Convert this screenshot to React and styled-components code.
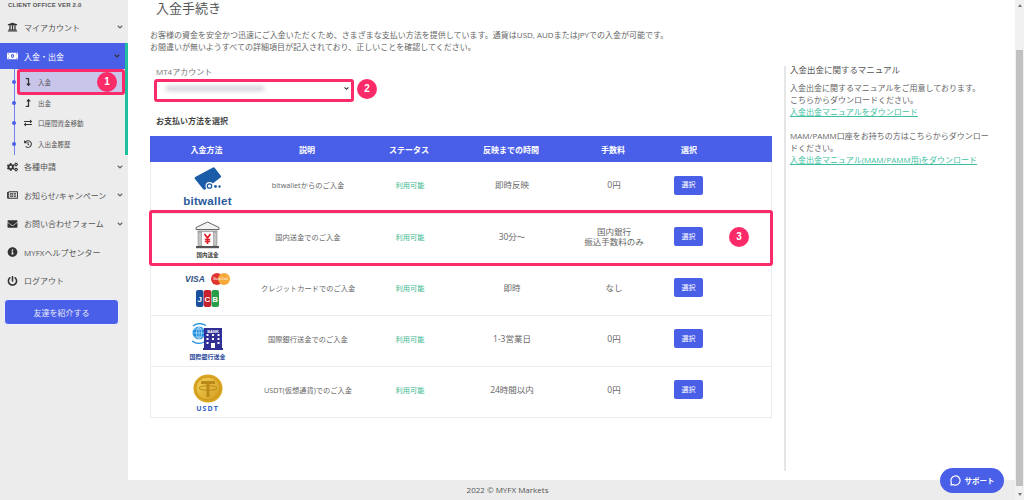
import React from 'react'
import styled, { createGlobalStyle } from 'styled-components'
import {
  FaUniversity,
  FaMoneyBillAlt,
  FaLevelDownAlt,
  FaLevelUpAlt,
  FaExchangeAlt,
  FaHistory,
  FaCogs,
  FaRegNewspaper,
  FaEnvelope,
  FaInfoCircle,
  FaPowerOff,
  FaAngleDown,
} from 'react-icons/fa'
import { MessageCircle } from 'lucide-react'

const fontStack = '"Open Sans", "Noto Sans CJK JP", sans-serif'

const GlobalStyle = createGlobalStyle`
  html, body {
    margin: 0;
    height: 500px;
    overflow: hidden;
    background: #fff;
  }
  * {
    box-sizing: border-box;
  }
  body {
    font-family: ${fontStack};
    color: #666;
  }
`

const Page = styled.div`
  position: relative;
  display: flex;
  width: 1024px;
  height: 500px;
  overflow: hidden;
`

const Sidebar = styled.aside`
  width: 128px;
  flex: none;
  background: #ececec;
  display: flex;
  flex-direction: column;
`

const Version = styled.div`
  height: 11px;
  padding-left: 8px;
  font: 700 6px/11px "Liberation Sans", sans-serif;
  letter-spacing: 0.2px;
  color: #555;
`

const NavItem = styled.div`
  display: flex;
  align-items: center;
  height: ${(p) => p.$h || 28.5}px;
  padding: 0 4px 0 7px;
  font-size: 8px;
  color: ${(p) => (p.$active ? '#fff' : '#555')};
  background: ${(p) => (p.$active ? '#4a5fe8' : 'transparent')};
  border-right: ${(p) => (p.$active ? '3px solid #1fbf9f' : '0')};
  white-space: nowrap;
  svg.lead {
    width: 11px;
    height: 10px;
    margin-right: 6px;
    color: ${(p) => (p.$active ? '#fff' : '#333')};
    flex: none;
  }
  svg.arrow {
    margin-left: auto;
    width: 8px;
    height: 8px;
    color: ${(p) => (p.$active ? '#333' : '#666')};
  }
`

const SubMenu = styled.div`
  position: relative;
  height: 86px;
  border-right: 3px solid #1fbf9f;
  padding: 3px 3px 0 14px;
  &::before {
    content: '';
    position: absolute;
    left: 14px;
    top: 0;
    bottom: 0;
    width: 1px;
    background: #6f80ef;
  }
`

const LowerNav = styled.div`
  margin-top: -2.5px;
`

const SubItem = styled.div`
  position: relative;
  display: flex;
  align-items: center;
  height: 20.5px;
  margin-left: 3px;
  padding-left: 7px;
  font-size: 6.5px;
  color: #555;
  background: ${(p) => (p.$current ? '#c9c5ea' : 'transparent')};
  svg {
    width: 8px;
    height: 8px;
    margin-right: 6px;
    color: #333;
    flex: none;
  }
  &::before {
    content: '';
    position: absolute;
    left: -5px;
    top: 8px;
    width: 4px;
    height: 4px;
    border-radius: 50%;
    background: #4a5fe8;
  }
`

const ReferButton = styled.div`
  margin: 4px 9px 0 4px;
  height: 26px;
  border-radius: 4px;
  background: #4a5fe8;
  border: 1px solid #eef0ff;
  color: #e8eafc;
  font-size: 8px;
  display: flex;
  align-items: center;
  justify-content: center;
`

const Main = styled.main`
  flex: 1;
  display: flex;
  flex-direction: column;
  min-width: 0;
`

const Content = styled.div`
  flex: 1;
  display: flex;
  padding: 0 0 0 22px;
`

const Left = styled.div`
  width: 622px;
  flex: none;
`

const Title = styled.h1`
  margin: 0 0 0 6px;
  height: 29px;
  font-size: 13px;
  line-height: 17px;
  font-weight: 400;
  color: #555;
`

const Intro = styled.p`
  margin: 0;
  font-size: 8px;
  line-height: 12px;
  color: #666;
  white-space: nowrap;
`

const FieldLabel = styled.div`
  margin: 13px 0 0 6px;
  font-size: 8px;
  line-height: 11px;
  color: #777;
`

const SelectBox = styled.div`
  margin: 3px 0 0 6px;
  width: 196px;
  height: 16px;
  display: flex;
  align-items: center;
  justify-content: space-between;
  padding: 0 2px 0 10px;
  svg {
    width: 7px;
    height: 7px;
    color: #333;
  }
`

const Blurred = styled.div`
  width: 98px;
  height: 5px;
  background: #d4d4da;
  filter: blur(2px);
`

const SectionLabel = styled.div`
  margin: 19px 0 0 6px;
  font-size: 8px;
  line-height: 11px;
  font-weight: 700;
  color: #444;
`

const Table = styled.div`
  margin-top: 10px;
  border: 1px solid #ececec;
  border-top: 0;
`

const columns = '113px 88px 116px 88px 116px 36px 64px'

const HeadRow = styled.div`
  display: grid;
  grid-template-columns: ${columns};
  align-items: center;
  height: 26px;
  margin: 0 -1px;
  background: #4a5fe8;
  color: #fff;
  font-size: 8px;
  font-weight: 700;
`

const Row = styled.div`
  display: grid;
  grid-template-columns: ${columns};
  align-items: center;
  height: 51px;
  line-height: 10px;
  color: #666;
  & + & {
    border-top: 1px solid #ececec;
  }
`

const HeadCell = styled.div`
  justify-self: center;
  white-space: nowrap;
`

const Cell = styled.div`
  justify-self: center;
  text-align: center;
  white-space: nowrap;
  margin-bottom: 5px;
  color: ${(p) => p.$color || 'inherit'};
  font-size: ${(p) => p.$size || '7.25px'};
`

const PickButton = styled.div`
  justify-self: center;
  width: 29px;
  height: 19px;
  margin: 0 3px 5px 0;
  border-radius: 2px;
  background: #4a5fe8;
  color: #fff;
  font-size: 7px;
  display: flex;
  align-items: center;
  justify-content: center;
`

const Logo = styled.div`
  justify-self: center;
  display: flex;
  flex-direction: column;
  align-items: center;
  margin-top: ${(p) => p.$shift || 0}px;
  color: ${(p) => p.$color || '#333'};
  font-weight: 700;
  white-space: nowrap;
`

const LogoCaption = styled.span`
  font-size: ${(p) => p.$size || '5.5px'};
  line-height: 8px;
  margin-top: ${(p) => p.$gap || 2}px;
  letter-spacing: ${(p) => p.$track || '0'};
`

const BitwalletWord = styled.span`
  font: 700 11.5px/12px "Liberation Sans", sans-serif;
  color: #2a5a9c;
  letter-spacing: 0.3px;
  margin-top: 3px;
`

const CardGroup = styled.div`
  justify-self: center;
  display: flex;
  flex-direction: column;
  align-items: center;
  gap: 5px;
`

const CardLine = styled.div`
  display: flex;
  align-items: center;
  gap: 6px;
`

const VisaMark = styled.span`
  font: italic 700 8.5px/1 "Liberation Sans", sans-serif;
  color: #2f4f80;
`

const Aside = styled.aside`
  width: 206px;
  margin-left: 12px;
  padding: 0 0 0 6px;
  height: 471px;
  position: relative;
  font-size: 8px;
  line-height: 12px;
  color: #666;
`

const AsideRule = styled.div`
  position: absolute;
  left: 0;
  top: 66px;
  bottom: 0;
  width: 2px;
  background: #e6e6e6;
`

const AsideTitle = styled.div`
  margin: 64px 0 6px;
  font-size: 8.5px;
  line-height: 12px;
  color: #555;
`

const AsideBlock = styled.p`
  margin: 0 0 12px;
`

const AsideLink = styled.a`
  color: #3fbf9f;
  text-decoration: underline;
`

const Footer = styled.footer`
  height: 20px;
  padding-right: 128px;
  background: #ececec;
  text-align: center;
  font-size: 8px;
  line-height: 20px;
  color: #555;
`

const Scrollbar = styled.div`
  width: 9px;
  flex: none;
  background: #f1f1f1;
  display: flex;
  flex-direction: column;
  align-items: center;
  padding: 4px 0;
`

const ScrollThumb = styled.div`
  flex: 1;
  width: 7px;
  margin: 43px 0 7px;
  background: #c1c1c1;
`

const ScrollArrow = styled.div`
  width: 0;
  height: 0;
  border-left: 2.5px solid transparent;
  border-right: 2.5px solid transparent;
  border-bottom: ${(p) => (p.$down ? '0' : '3px solid #777')};
  border-top: ${(p) => (p.$down ? '3px solid #777' : '0')};
`

// annotations sit on top of the page, so these are the absolute ones
const Highlight = styled.div`
  position: absolute;
  left: ${(p) => p.$x}px;
  top: ${(p) => p.$y}px;
  width: ${(p) => p.$w}px;
  height: ${(p) => p.$h}px;
  border: 3px solid #fb2a68;
  border-radius: 3px;
`

const Badge = styled.div`
  position: absolute;
  left: ${(p) => p.$x}px;
  top: ${(p) => p.$y}px;
  width: 20px;
  height: 20px;
  border-radius: 50%;
  background: #fb2a68;
  color: #fff;
  font: 700 10px/20px "Liberation Sans", sans-serif;
  text-align: center;
`

const SupportButton = styled.div`
  position: absolute;
  left: 940px;
  top: 468px;
  width: 64px;
  height: 25px;
  border-radius: 13px;
  background: #4a5fe8;
  color: #fff;
  font-size: 7.5px;
  font-weight: 700;
  display: flex;
  align-items: center;
  justify-content: center;
  gap: 4px;
  svg {
    width: 11px;
    height: 11px;
  }
`

const lowerNav = [
  { icon: FaCogs, label: '各種申請', arrow: true },
  { icon: FaRegNewspaper, label: 'お知らせ/キャンペーン', arrow: true },
  { icon: FaEnvelope, label: 'お問い合わせフォーム', arrow: true },
  { icon: FaInfoCircle, label: 'MYFXヘルプセンター' },
  { icon: FaPowerOff, label: 'ログアウト' },
]

const subItems = [
  { icon: FaLevelDownAlt, label: '入金', current: true },
  { icon: FaLevelUpAlt, label: '出金' },
  { icon: FaExchangeAlt, label: '口座間資金移動' },
  { icon: FaHistory, label: '入出金履歴' },
]

const BitwalletLogo = () => (
  <Logo $shift={-1}>
    <svg width="28" height="25" viewBox="0 0 28 25">
      <path d="M19 0.500 Q20 0 20.800 1 L27 9 Q27.500 10 26.500 10.500 L11 22.500 Q10 23 9 22 L0.600 11.500 Q0.300 10.500 1.200 10 Z" fill="#1b5ca8" />
      <circle cx="15.500" cy="19" r="4" fill="#fff" />
      <circle cx="15.500" cy="19" r="2.200" fill="none" stroke="#1b5ca8" strokeWidth="1.300" />
      <circle cx="21.500" cy="19.500" r="1.400" fill="#1b5ca8" />
      <circle cx="25.500" cy="19.500" r="1.200" fill="#1b5ca8" />
    </svg>
    <BitwalletWord>bitwallet</BitwalletWord>
  </Logo>
)

const DomesticLogo = () => (
  <Logo $shift={2}>
    <svg width="25" height="28" viewBox="0 0 25 28">
      <path d="M12.500 1 L24 6.500 V8.500 H1 V6.500 Z" fill="#f2f2f2" stroke="#555" strokeWidth="0.900" />
      <rect x="2.500" y="9.500" width="20" height="1.500" fill="#aaa" />
      <rect x="3" y="11" width="4" height="13.500" fill="#c4c4c4" stroke="#777" strokeWidth="0.500" />
      <rect x="18" y="11" width="4" height="13.500" fill="#c4c4c4" stroke="#777" strokeWidth="0.500" />
      <rect x="7" y="11" width="11" height="13.500" fill="#fff" />
      <path d="M9.500 13 L12.500 17 L15.500 13 M12.500 17 V23 M9.800 18.500 H15.200 M9.800 20.500 H15.200" fill="none" stroke="#e0202a" strokeWidth="1.700" />
      <rect x="1" y="25" width="23" height="2.200" fill="#555" />
    </svg>
    <LogoCaption>国内送金</LogoCaption>
  </Logo>
)

const CardsLogo = () => (
  <CardGroup>
    <CardLine>
      <VisaMark>VISA</VisaMark>
      <svg width="19" height="12" viewBox="0 0 19 12">
        <circle cx="6" cy="6" r="6" fill="#e0352f" />
        <circle cx="13" cy="6" r="6" fill="#f5a93a" />
        <text x="9.500" y="7" fontSize="2.800" fill="#fff" textAnchor="middle" fontFamily="Liberation Sans">MasterCard</text>
      </svg>
    </CardLine>
    <svg width="23" height="17" viewBox="0 0 23 17">
      <rect x="0" y="0" width="7.500" height="17" rx="2" fill="#1a4f9c" />
      <rect x="7.750" y="0" width="7.500" height="17" rx="2" fill="#c8202e" />
      <rect x="15.500" y="0" width="7.500" height="17" rx="2" fill="#2a9d4a" />
      <text x="3.750" y="12" fontSize="8" fontWeight="700" fill="#fff" textAnchor="middle" fontFamily="Liberation Sans">J</text>
      <text x="11.500" y="12" fontSize="8" fontWeight="700" fill="#fff" textAnchor="middle" fontFamily="Liberation Sans">C</text>
      <text x="19.250" y="12" fontSize="8" fontWeight="700" fill="#fff" textAnchor="middle" fontFamily="Liberation Sans">B</text>
    </svg>
  </CardGroup>
)

const WireLogo = () => (
  <Logo $color="#2c4a9c" $shift={2}>
    <svg width="32" height="27" viewBox="0 0 32 27">
      <circle cx="8" cy="10" r="6.500" fill="#1e8fe0" />
      <path d="M1.500 10 H14.500 M8 3.500 V16.500 M3 6 H13 M3 14 H13 M8 3.500 C4.500 7 4.500 13 8 16.500 M8 3.500 C11.500 7 11.500 13 8 16.500" fill="none" stroke="#fff" strokeWidth="0.500" />
      <path d="M2 3 C6 0 11 0 15 2.500 M14 18.500 C10 21 5 21 1 18" fill="none" stroke="#1e8fe0" strokeWidth="1.200" />
      <rect x="13" y="5" width="18" height="20" fill="#2f2f96" />
      <text x="22" y="9.500" fontSize="4" fill="#fff" textAnchor="middle" fontFamily="Liberation Sans" fontWeight="700">BANK</text>
      <path d="M15.500 12 H17.500 M21 12 H23 M26.500 12 H28.500 M15.500 16 H17.500 M21 16 H23 M26.500 16 H28.500 M15.500 20 H17.500 M26.500 20 H28.500" stroke="#fff" strokeWidth="2" />
      <rect x="20" y="20" width="4" height="5" fill="#fff" />
      <rect x="12" y="25" width="20" height="2" fill="#2f2f96" />
    </svg>
    <LogoCaption $size="6px" $gap={3}>国際銀行送金</LogoCaption>
  </Logo>
)

const UsdtLogo = () => (
  <Logo $color="#2c62c9" $shift={3}>
    <svg width="30" height="29" viewBox="0 0 30 29">
      <defs>
        <linearGradient id="coin" x1="0" y1="0" x2="1" y2="1">
          <stop offset="0" stopColor="#f4d35a" />
          <stop offset="1" stopColor="#d29a1c" />
        </linearGradient>
      </defs>
      <ellipse cx="15" cy="14.500" rx="14.500" ry="14" fill="#d9a520" />
      <ellipse cx="15" cy="14.500" rx="12" ry="11.500" fill="url(#coin)" stroke="#c58f16" strokeWidth="0.800" />
      <path d="M8 8.500 H22 M15 8.500 V23" stroke="#b98a1a" strokeWidth="3" fill="none" />
      <ellipse cx="15" cy="14" rx="9" ry="2.300" fill="none" stroke="#b98a1a" strokeWidth="1" />
    </svg>
    <LogoCaption $size="7px" $track="1px">USDT</LogoCaption>
  </Logo>
)

const rows = [
  { logo: <BitwalletLogo />, desc: 'bitwalletからのご入金', time: '即時反映', fee: '0円' },
  { logo: <DomesticLogo />, desc: '国内送金でのご入金', time: '30分～', fee: <>国内銀行<br />振込手数料のみ</> },
  { logo: <CardsLogo />, desc: 'クレジットカードでのご入金', time: '即時', fee: 'なし' },
  { logo: <WireLogo />, desc: '国際銀行送金でのご入金', time: '1-3営業日', fee: '0円' },
  { logo: <UsdtLogo />, desc: 'USDT(仮想通貨)でのご入金', time: '24時間以内', fee: '0円' },
]

const App = () => {
  return (
    <Page>
      <GlobalStyle />
      <Sidebar>
        <Version>CLIENT OFFICE VER 2.0</Version>
        <NavItem $h={32}>
          <FaUniversity className="lead" />
          マイアカウント
          <FaAngleDown className="arrow" />
        </NavItem>
        <NavItem $active $h={26}>
          <FaMoneyBillAlt className="lead" />
          入金・出金
          <FaAngleDown className="arrow" />
        </NavItem>
        <SubMenu>
          {subItems.map(({ icon: Icon, label, current }) => (
            <SubItem key={label} $current={current}>
              <Icon />
              {label}
            </SubItem>
          ))}
        </SubMenu>
        <LowerNav>
          {lowerNav.map(({ icon: Icon, label, arrow }) => (
            <NavItem key={label}>
              <Icon className="lead" />
              {label}
              {arrow && <FaAngleDown className="arrow" />}
            </NavItem>
          ))}
        </LowerNav>
        <ReferButton>友達を紹介する</ReferButton>
      </Sidebar>
      <Main>
        <Content>
          <Left>
            <Title>入金手続き</Title>
            <Intro>
              お客様の資金を安全かつ迅速にご入金いただくため、さまざまな支払い方法を提供しています。通貨はUSD, AUDまたはJPYでの入金が可能です。
              <br />
              お間違いが無いようすべての詳細項目が記入されており、正しいことを確認してください。
            </Intro>
            <FieldLabel>MT4アカウント</FieldLabel>
            <SelectBox>
              <Blurred />
              <FaAngleDown />
            </SelectBox>
            <SectionLabel>お支払い方法を選択</SectionLabel>
            <Table>
              <HeadRow>
                <HeadCell>入金方法</HeadCell>
                <HeadCell>説明</HeadCell>
                <HeadCell>ステータス</HeadCell>
                <HeadCell>反映までの時間</HeadCell>
                <HeadCell>手数料</HeadCell>
                <HeadCell>選択</HeadCell>
              </HeadRow>
              {rows.map((r) => (
                <Row key={r.desc}>
                  {r.logo}
                  <Cell>{r.desc}</Cell>
                  <Cell $color="#3cb98f">利用可能</Cell>
                  <Cell $size="8.5px">{r.time}</Cell>
                  <Cell $size="8.5px">{r.fee}</Cell>
                  <PickButton>選択</PickButton>
                </Row>
              ))}
            </Table>
          </Left>
          <Aside>
            <AsideRule />
            <AsideTitle>入金出金に関するマニュアル</AsideTitle>
            <AsideBlock>
              入金出金に関するマニュアルをご用意しております。
              <br />
              こちらからダウンロードください。
              <br />
              <AsideLink>入金出金マニュアルをダウンロード</AsideLink>
            </AsideBlock>
            <AsideBlock>
              MAM/PAMM口座をお持ちの方はこちらからダウンロードください。
              <br />
              <AsideLink>入金出金マニュアル(MAM/PAMM用)をダウンロード</AsideLink>
            </AsideBlock>
          </Aside>
        </Content>
        <Footer>2022 © MYFX Markets</Footer>
      </Main>
      <Scrollbar>
        <ScrollArrow />
        <ScrollThumb />
        <ScrollArrow $down />
      </Scrollbar>

      <Highlight $x={17} $y={69} $w={108} $h={26} />
      <Badge $x={97} $y={72}>1</Badge>
      <Highlight $x={154} $y={79} $w={200} $h={23} />
      <Badge $x={357} $y={79}>2</Badge>
      <Highlight $x={149} $y={210} $w={624} $h={56} />
      <Badge $x={729} $y={227}>3</Badge>
      <SupportButton>
        <MessageCircle strokeWidth={2.500} />
        サポート
      </SupportButton>
    </Page>
  )
}

export default App
